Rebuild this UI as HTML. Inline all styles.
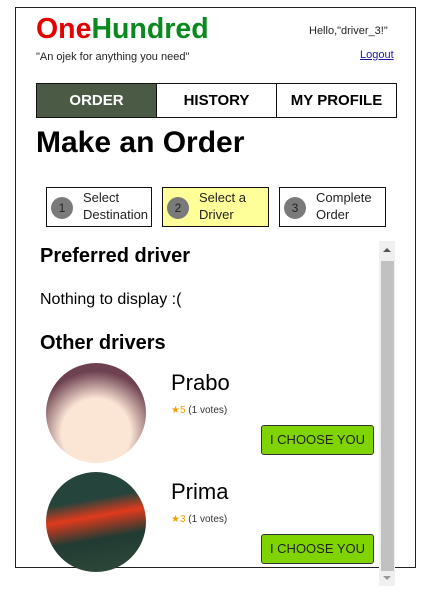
<html><head><style>
body{margin:0;width:426px;height:593px;background:#fff;position:relative;font-family:"Liberation Sans",sans-serif;overflow:hidden}
.a{position:absolute}
.box{left:15px;top:7px;width:399px;height:559px;border:1px solid #222}
.tab{top:83px;height:33px;border:1px solid #111;font-weight:bold;font-size:15px;line-height:33px;text-align:center}
.step{top:187px;height:38px;border:1px solid #111;font-size:13px;color:#222;line-height:17px}
.num{position:absolute;left:4px;top:9px;width:22px;height:22px;border-radius:50%;background:#7a7a7a;color:#222;font-size:12px;text-align:center;line-height:22px}
.btn{left:261px;width:111px;height:28px;background:#7fd400;border:1px solid #333;border-radius:3px;font-size:13px;text-align:center;line-height:28px;color:#222}
</style></head><body>
<div class="a box"></div>
<div class="a" style="left:36px;top:13px;font-size:28.5px;font-weight:bold"><span style="color:#e60000">One</span><span style="color:#0a8a1e">Hundred</span></div>
<div class="a" style="left:36px;top:51px;font-size:11px;color:#222">"An ojek for anything you need"</div>
<div class="a" style="left:309px;top:25px;font-size:11px;color:#222">Hello,"driver_3!"</div>
<div class="a" style="left:360px;top:49px;font-size:11px;color:#1a1aa6;text-decoration:underline">Logout</div>
<div class="a tab" style="left:36px;width:119px;background:#4a5a45;color:#fff">ORDER</div>
<div class="a tab" style="left:156px;width:119px">HISTORY</div>
<div class="a tab" style="left:276px;width:119px">MY PROFILE</div>
<div class="a" style="left:36px;top:126px;font-size:30px;font-weight:bold">Make an Order</div>
<div class="a step" style="left:46px;width:104px"><div class="num">1</div><div style="position:absolute;left:36px;top:1px">Select<br>Destination</div></div>
<div class="a step" style="left:162px;width:105px;background:#ffff99"><div class="num">2</div><div style="position:absolute;left:36px;top:1px">Select a<br>Driver</div></div>
<div class="a step" style="left:279px;width:105px"><div class="num">3</div><div style="position:absolute;left:36px;top:1px">Complete<br>Order</div></div>
<div class="a" style="left:40px;top:245px;font-size:20px;font-weight:bold">Preferred driver</div>
<div class="a" style="left:40px;top:291px;font-size:16px">Nothing to display :(</div>
<div class="a" style="left:40px;top:332px;font-size:20px;font-weight:bold">Other drivers</div>
<div class="a" style="left:46px;top:363px;width:100px;height:100px;border-radius:50%;background:radial-gradient(circle at 50% 70%,#fbe6d6 40%,#6e4150 72%)"></div>
<div class="a" style="left:46px;top:472px;width:100px;height:100px;border-radius:50%;background:linear-gradient(170deg,#24443c 30%,#e03a1c 45%,#213b33 65%,#2f4a3a)"></div>
<div class="a" style="left:171px;top:370px;font-size:22px">Prabo</div>
<div class="a" style="left:171px;top:405px;font-size:10px;color:#333"><span style="color:#f0a000">★5</span> (1 votes)</div>
<div class="a" style="left:171px;top:479px;font-size:22px">Prima</div>
<div class="a" style="left:171px;top:514px;font-size:10px;color:#333"><span style="color:#f0a000">★3</span> (1 votes)</div>
<div class="a btn" style="top:425px">I CHOOSE YOU</div>
<div class="a btn" style="top:534px">I CHOOSE YOU</div>
<div class="a" style="left:379px;top:241px;width:16px;height:345px;background:#f0f0f0"></div>
<div class="a" style="left:381px;top:261px;width:13px;height:310px;background:#c1c1c1"></div>
<div class="a" style="left:383px;top:248px;width:0;height:0;border:4px solid transparent;border-bottom-color:#555;border-top:0"></div>
<div class="a" style="left:383px;top:576px;width:0;height:0;border:4px solid transparent;border-top-color:#999;border-bottom:0"></div>
</body></html>
